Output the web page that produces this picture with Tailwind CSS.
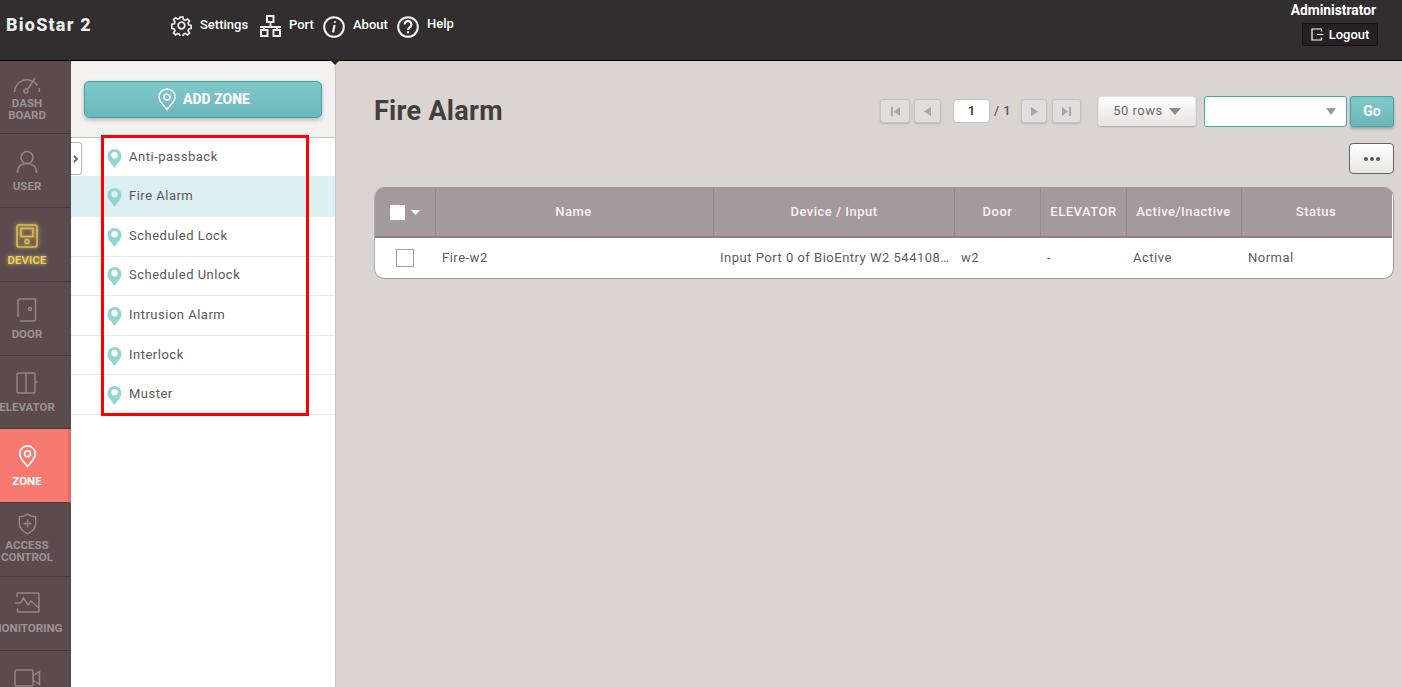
<!DOCTYPE html>
<html><head><meta charset="utf-8"><script src="https://cdn.jsdelivr.net/npm/@tailwindcss/browser@4"></script></head>
<body class="w-[1402px] h-[687px] overflow-hidden font-['Roboto',sans-serif] bg-[#dad5d1]">
<div class="relative w-[1402px] h-[687px] flex flex-col overflow-hidden">
  <!-- header -->
  <header class="h-[61px] shrink-0 bg-[#322e2f] border-b border-black flex text-white relative z-20">
    <div class="w-[171px] pl-[6px] pt-[13px] text-[18px] leading-[24px] font-extrabold tracking-[1.2px] text-[#eeeeee]">BioStar 2</div>
    <nav class="flex items-start pt-[14px] text-[13px] leading-[20px] font-medium text-white">
      <svg class="w-[21px] h-[21px] mt-px" viewBox="0 0 24 24" fill="none" stroke="#ececec" stroke-width="2"><circle cx="12" cy="12" r="3.8"/><path d="M10.3 2h3.4l.6 3 2.2.9 2.6-1.7 2.4 2.4-1.7 2.6.9 2.2 3 .6v3.400l-3 .6-.9 2.2 1.700 2.600-2.400 2.400-2.600-1.700-2.200.9-.6 3h-3.400l-.6-3-2.200-.9-2.600 1.700-2.400-2.400 1.700-2.600-.9-2.200-3-.6V10.500l3-.6.9-2.200-1.700-2.600 2.400-2.400 2.600 1.700 2.200-.9z" transform="translate(.5 .5) scale(.96)"/></svg>
      <span class="ml-[8px] w-[60px] mt-[1px]">Settings</span>
      <svg class="w-[21px] h-[22px] mt-px" viewBox="0 0 21 22" fill="none" stroke="#ececec" stroke-width="2"><rect x="7" y="1" width="6.500" height="6"/><path d="M10.500 7v5M0 12h21M4 12v3M17 12v3"/><rect x="1" y="15" width="6.500" height="6"/><rect x="13.500" y="15" width="6.500" height="6"/></svg>
      <span class="ml-[8px] w-[34px] mt-[1px]">Port</span>
      <svg class="w-[22px] h-[22px] mt-[2px]" viewBox="0 0 22 22" fill="none" stroke="#f2f2f2" stroke-width="2"><circle cx="11" cy="11" r="9.800"/><path d="M12 5.200v1.600M11.600 9 10 16.600" stroke-width="2.200"/></svg>
      <span class="ml-[8px] w-[45px] mt-[1px]">About</span>
      <svg class="w-[22px] h-[22px] -ml-px mt-[2px]" viewBox="0 0 22 22" fill="none" stroke="#f2f2f2" stroke-width="2"><circle cx="11" cy="11" r="9.800"/><path d="M7.600 8.400a3.400 3.400 0 1 1 5.200 2.900c-1.200.8-1.800 1.400-1.800 2.700M11 15.300v2" stroke-width="2.200"/></svg>
      <span class="ml-[8px]">Help</span>
    </nav>
    <div class="absolute right-[24px] top-0 flex flex-col items-end">
      <div class="text-[13.8px] leading-[20px] font-bold text-white mr-[2px]">Administrator</div>
      <div class="mt-[3px] w-[76px] h-[23px] bg-[#252122] border border-[#151314] rounded-[2px] flex items-center justify-center gap-[5px] text-[13px] font-medium">
        <svg class="w-[13px] h-[13px]" viewBox="0 0 13 13" fill="none" stroke="#fff" stroke-width="1.200"><path d="M10.500 3.500V1H1v11h9.500V9.500M6 6.500h6.500"/></svg>
        <span>Logout</span>
      </div>
    </div>
    <div class="absolute left-[330px] top-[60px] w-0 h-0 border-l-[5px] border-r-[5px] border-t-[5px] border-l-transparent border-r-transparent border-t-[#2a2627]"></div>
  </header>

  <div class="flex flex-1 min-h-0">
    <!-- rail -->
    <aside class="w-[71px] shrink-0 bg-[#5b4b4f] text-[#9c9295] text-[11.5px] leading-[12px] font-bold text-center overflow-hidden">
      <div class="h-[73px] border-b border-[#443a3d] pr-[17px] flex flex-col items-center pt-[14px]">
        <svg class="w-[30px] h-[20px]" viewBox="0 0 30 20" fill="none" stroke="#928689" stroke-width="1.500"><path d="M2.500 17a12.500 12.500 0 0 1 23-6.500M27 13a13 13 0 0 1 .5 4"/><circle cx="14" cy="16" r="2"/><path d="M15.500 14.500 23 3"/></svg>
        <div class="mt-[2px]">DASH<br>BOARD</div>
      </div>
      <div class="h-[74px] border-b border-[#443a3d] pr-[17px] flex flex-col items-center pt-[16px]">
        <svg class="w-[22px] h-[24px]" viewBox="0 0 22 24" fill="none" stroke="#928689" stroke-width="1.600"><circle cx="11" cy="7.500" r="6"/><path d="M1.500 23c0-6 3.500-9.500 9.500-9.500s9.500 3.500 9.500 9.500"/></svg>
        <div class="mt-[6px]">USER</div>
      </div>
      <div class="h-[74px] border-b border-[#443a3d] pr-[17px] flex flex-col items-center pt-[16px] text-[#e8cc5c]">
        <svg class="w-[22px] h-[24px] drop-shadow-[0_0_2px_#e8cc5c]" viewBox="0 0 22 24" fill="none" stroke="#d9bd50" stroke-width="1.600"><rect x="1" y="1" width="20" height="22" rx="2"/><rect x="5" y="4.500" width="12" height="8"/><circle cx="11" cy="17.500" r="2"/></svg>
        <div class="mt-[6px] drop-shadow-[0_0_2px_#e8cc5c]">DEVICE</div>
      </div>
      <div class="h-[74px] border-b border-[#443a3d] pr-[17px] flex flex-col items-center pt-[16px]">
        <svg class="w-[20px] h-[24px]" viewBox="0 0 20 24" fill="none" stroke="#928689" stroke-width="1.500"><path d="M1 19V3a2 2 0 0 1 2-2h15.500v20a2 2 0 0 1-2 2H3"/><circle cx="13" cy="11" r="1.500"/></svg>
        <div class="mt-[6px]">DOOR</div>
      </div>
      <div class="h-[73px] border-b border-[#443a3d] pr-[17px] flex flex-col items-center pt-[16px] whitespace-nowrap">
        <svg class="w-[22px] h-[22px]" viewBox="0 0 22 22" fill="none" stroke="#928689" stroke-width="1.500"><rect x="1" y="1" width="18" height="20" rx="1"/><path d="M10 1v20M19 10h2.500"/></svg>
        <div class="mt-[7px] -mx-[5px]">ELEVATOR</div>
      </div>
      <div class="h-[74px] bg-[#f67a70] border-r-[3px] border-[#e56a62] border-b border-b-[#443a3d] pr-[14px] flex flex-col items-center pt-[16px] text-white">
        <svg class="w-[19px] h-[23px]" viewBox="0 0 20 25" fill="none" stroke="#fff" stroke-width="1.800"><path d="M10 23.500C6 18 1.500 15 1.500 9.500a8.500 8.500 0 0 1 17 0C18.500 15 14 18 10 23.500z"/><circle cx="10" cy="9.500" r="3.200"/></svg>
        <div class="mt-[7px]">ZONE</div>
      </div>
      <div class="h-[74px] border-b border-[#443a3d] pr-[17px] flex flex-col items-center pt-[10px]">
        <svg class="w-[19px] h-[22px]" viewBox="0 0 21 24" fill="none" stroke="#928689" stroke-width="1.600"><path d="M10.500 1c3 2 6 3 9 3v8c0 5-4.500 8.500-9 11-4.500-2.500-9-6-9-11V4c3 0 6-1 9-3zM10.500 7v9M6 11.500h9"/></svg>
        <div class="mt-[4px]">ACCESS<br>CONTROL</div>
      </div>
      <div class="h-[74px] border-b border-[#443a3d] pr-[17px] flex flex-col items-center pt-[15px] whitespace-nowrap">
        <svg class="w-[26px] h-[21px]" viewBox="0 0 26 21" fill="none" stroke="#928689" stroke-width="1.500"><path d="M3 5V2a1 1 0 0 1 1-1h20a1 1 0 0 1 1 1v17a1 1 0 0 1-1 1H4.500a1 1 0 0 1-1-1v-3M1 11h5.500L9.500 6l4.500 7 3-4 8 7"/></svg>
        <div class="mt-[9px] -mx-[8px]">MONITORING</div>
      </div>
      <div class="h-[74px] pr-[17px] flex flex-col items-center pt-[18px]">
        <svg class="w-[27px] h-[18px]" viewBox="0 0 27 18" fill="none" stroke="#928689" stroke-width="1.500"><rect x="1" y="1" width="18" height="16" rx="1.500"/><path d="m19 7 6.500-4.500v13L19 11"/></svg>
      </div>
    </aside>

    <!-- zone list panel -->
    <section class="w-[265px] shrink-0 bg-white border-r border-[#c9c5c3] relative">
      <div class="h-[77px] bg-[#f3f2f0] border-b border-[#c4c2c1] pt-[20px] pl-[13px] pr-[13px]">
        <div class="w-[238px] h-[37px] rounded-[5px] border border-[#3ba5a5] bg-gradient-to-b from-[#80c9cb] to-[#6cb6ba] shadow-[0_2px_4px_rgba(0,0,0,0.25)] flex items-center justify-center gap-[7px] pl-[2px] text-white text-[14px] font-extrabold">
          <svg class="w-[18px] h-[23px]" viewBox="0 0 18 23" fill="none" stroke="#fff" stroke-width="1.500"><path d="M9 21.500C5.500 16.500 1 14 1 9a8 8 0 0 1 16 0c0 5-4.500 7.500-8 12.500z"/><circle cx="9" cy="9" r="3"/></svg>
          <span>ADD ZONE</span>
        </div>
      </div>
      <div class="absolute left-0 top-[81px] w-[11px] h-[33px] bg-white border border-l-0 border-[#b8b2b2] rounded-r-[3px] flex items-center justify-center z-10">
        <svg class="w-[6px] h-[8px]" viewBox="0 0 6 8" fill="none" stroke="#666" stroke-width="1.800"><path d="m1 1 3 3-3 3"/></svg>
      </div>
      <div class="text-[13px] leading-[20px] tracking-[0.5px] text-[#5d5658]">
        <div class="h-[38px] flex items-center pl-[36px] pb-[1px] gap-[7px]"><svg class="w-[15px] h-[19px] mt-[3px]" viewBox="0 0 15 19"><path fill="#93d5d5" fill-rule="evenodd" d="M7.500 19C5 14.500 0.500 12 0.500 7a7 7 0 0 1 14 0c0 5-4.500 7.500-7 12zM7.500 3a3.200 3.200 0 1 0 0 6.400 3.200 3.200 0 0 0 0-6.400z"/></svg><span>Anti-passback</span></div>
        <div class="h-[41px] flex items-center pl-[36px] pb-[2px] gap-[7px] bg-[#dcf0f1]"><svg class="w-[15px] h-[19px] mt-[3px]" viewBox="0 0 15 19"><path fill="#93d5d5" fill-rule="evenodd" d="M7.500 19C5 14.500 0.500 12 0.500 7a7 7 0 0 1 14 0c0 5-4.500 7.500-7 12zM7.500 3a3.200 3.200 0 1 0 0 6.400 3.200 3.200 0 0 0 0-6.400z"/></svg><span>Fire Alarm</span></div>
        <div class="h-[40px] flex items-center pl-[36px] pb-[1px] gap-[7px] border-b border-[#e8e8e8]"><svg class="w-[15px] h-[19px] mt-[3px]" viewBox="0 0 15 19"><path fill="#93d5d5" fill-rule="evenodd" d="M7.500 19C5 14.500 0.500 12 0.500 7a7 7 0 0 1 14 0c0 5-4.500 7.500-7 12zM7.500 3a3.200 3.200 0 1 0 0 6.400 3.200 3.200 0 0 0 0-6.400z"/></svg><span>Scheduled Lock</span></div>
        <div class="h-[39px] flex items-center pl-[36px] pb-[2px] gap-[7px] border-b border-[#e8e8e8]"><svg class="w-[15px] h-[19px] mt-[3px]" viewBox="0 0 15 19"><path fill="#93d5d5" fill-rule="evenodd" d="M7.500 19C5 14.500 0.500 12 0.500 7a7 7 0 0 1 14 0c0 5-4.500 7.500-7 12zM7.500 3a3.200 3.200 0 1 0 0 6.400 3.200 3.200 0 0 0 0-6.400z"/></svg><span>Scheduled Unlock</span></div>
        <div class="h-[40px] flex items-center pl-[36px] pb-[2px] gap-[7px] border-b border-[#e8e8e8]"><svg class="w-[15px] h-[19px] mt-[3px]" viewBox="0 0 15 19"><path fill="#93d5d5" fill-rule="evenodd" d="M7.500 19C5 14.500 0.500 12 0.500 7a7 7 0 0 1 14 0c0 5-4.500 7.500-7 12zM7.500 3a3.200 3.200 0 1 0 0 6.400 3.200 3.200 0 0 0 0-6.400z"/></svg><span>Intrusion Alarm</span></div>
        <div class="h-[39px] flex items-center pl-[36px] gap-[7px] border-b border-[#e8e8e8]"><svg class="w-[15px] h-[19px] mt-[3px]" viewBox="0 0 15 19"><path fill="#93d5d5" fill-rule="evenodd" d="M7.500 19C5 14.500 0.500 12 0.500 7a7 7 0 0 1 14 0c0 5-4.500 7.500-7 12zM7.500 3a3.200 3.200 0 1 0 0 6.400 3.200 3.200 0 0 0 0-6.400z"/></svg><span>Interlock</span></div>
        <div class="h-[40px] flex items-center pl-[36px] pb-[2px] gap-[7px] border-b border-[#e8e8e8]"><svg class="w-[15px] h-[19px] mt-[3px]" viewBox="0 0 15 19"><path fill="#93d5d5" fill-rule="evenodd" d="M7.500 19C5 14.500 0.500 12 0.500 7a7 7 0 0 1 14 0c0 5-4.500 7.500-7 12zM7.500 3a3.200 3.200 0 1 0 0 6.400 3.200 3.200 0 0 0 0-6.400z"/></svg><span>Muster</span></div>
      </div>
    </section>

    <!-- main -->
    <main class="flex-1 min-w-0 pl-[38px] pr-[8px]">
      <div class="h-[69px] flex items-start pt-[35px]">
        <h1 class="text-[27px] leading-[30px] font-bold tracking-[0.3px] text-[#433e40] w-[507px] -ml-px pl-px">Fire Alarm</h1>
        <div class="flex items-center mt-[3px]">
          <div class="w-[30px] h-[24px] bg-[#e0dedc] rounded-[3px] border border-[#c6c2c0] shadow-[0_1px_2px_rgba(0,0,0,0.15)] flex items-center justify-center"><svg class="w-[9px] h-[9px]" viewBox="0 0 9 9" fill="#a9a5a5"><path d="M0 0h2v9H0zM9 0v9L3 4.500z"/></svg></div>
          <div class="ml-[4px] w-[27px] h-[24px] bg-[#e0dedc] rounded-[3px] border border-[#c6c2c0] shadow-[0_1px_2px_rgba(0,0,0,0.15)] flex items-center justify-center"><svg class="w-[7px] h-[9px]" viewBox="0 0 7 9" fill="#a9a5a5"><path d="M7 0v9L0 4.500z"/></svg></div>
          <div class="ml-[12px] w-[37px] h-[24px] bg-white rounded-[4px] border border-[#c6c2c0] flex items-center justify-center text-[13px] font-bold text-[#4a4547]">1</div>
          <span class="ml-[4px] w-[27px] text-[13px] font-medium text-[#5a5557] tracking-[0.5px]">/ 1</span>
          <div class="w-[26px] h-[24px] bg-[#e0dedc] rounded-[3px] border border-[#c6c2c0] shadow-[0_1px_2px_rgba(0,0,0,0.15)] flex items-center justify-center"><svg class="w-[7px] h-[9px]" viewBox="0 0 7 9" fill="#a9a5a5"><path d="M0 0v9l7-4.500z"/></svg></div>
          <div class="ml-[5px] w-[29px] h-[24px] bg-[#e0dedc] rounded-[3px] border border-[#c6c2c0] shadow-[0_1px_2px_rgba(0,0,0,0.15)] flex items-center justify-center"><svg class="w-[9px] h-[9px]" viewBox="0 0 9 9" fill="#a9a5a5"><path d="M7 0h2v9H7zM0 0v9l6-4.500z"/></svg></div>
        </div>
        <div class="ml-[17px] mt-0 w-[98px] h-[30px] rounded-[3px] bg-gradient-to-b from-white to-[#e6e4e3] border border-[#e6e4e2] shadow-[0_1px_2px_rgba(0,0,0,0.2)] flex items-center justify-center gap-[6px] text-[13px] tracking-[0.5px] text-[#6e696b]">
          <span>50 rows</span><svg class="w-[12px] h-[7px]" viewBox="0 0 12 7" fill="#8e8a8a"><path d="M0 0h12L6 7z"/></svg>
        </div>
        <div class="ml-[8px] mt-0 w-[143px] h-[31px] rounded-[3px] bg-white border border-[#3fa9a5] flex items-center justify-end pr-[10px]">
          <svg class="w-[10px] h-[7px]" viewBox="0 0 10 7" fill="#a09c9c"><path d="M0 0h10L5 7z"/></svg>
        </div>
        <div class="ml-[3px] mt-0 w-[44px] h-[31px] rounded-[3px] bg-gradient-to-b from-[#80c9cb] to-[#6cb6ba] border border-[#3ba5a5] shadow-[0_2px_3px_rgba(0,0,0,0.25)] flex items-center justify-center text-[14px] font-bold text-white">Go</div>
      </div>
      <div class="flex justify-end h-[57px] pt-[13px]">
        <div class="w-[45px] h-[31px] rounded-[4px] border border-[#6b5f62] bg-gradient-to-b from-white to-[#e8e6e5] flex items-center justify-center gap-[2px]">
          <i class="w-[4px] h-[4px] rounded-full bg-[#5c5356]"></i><i class="w-[4px] h-[4px] rounded-full bg-[#5c5356]"></i><i class="w-[4px] h-[4px] rounded-full bg-[#5c5356]"></i>
        </div>
      </div>
      <div class="w-[1020px] h-[92px] rounded-[10px] overflow-hidden border border-[#a59a9d] border-t-0 border-l-[#b3aaac] bg-white text-[13px] tracking-[0.5px]">
        <div class="h-[51px] pt-[1px] bg-[#a4999c] border-b-2 border-[#8d8285] flex mr-[1px] font-medium text-[#f5f3f3] text-center items-stretch">
          <div class="w-[61px] border-r border-[#948a8d] flex items-center pl-[15px] gap-[6px]"><i class="w-[15px] h-[15px] bg-white"></i><svg class="w-[9px] h-[5px]" viewBox="0 0 9 5" fill="#fff"><path d="M0 0h9L4.500 5z"/></svg></div>
          <div class="w-[278px] border-r border-[#948a8d] flex items-center justify-center pr-[2px]">Name</div>
          <div class="w-[241px] border-r border-[#948a8d] flex items-center justify-center">Device / Input</div>
          <div class="w-[86px] border-r border-[#948a8d] flex items-center justify-center">Door</div>
          <div class="w-[86px] border-r border-[#948a8d] flex items-center justify-center">ELEVATOR</div>
          <div class="w-[115px] border-r border-[#948a8d] flex items-center justify-center whitespace-nowrap pr-[1px]">Active/Inactive</div>
          <div class="flex-1 flex items-center justify-center pr-[2px]">Status</div>
        </div>
        <div class="h-[40px] flex items-center text-[#605a5c]">
          <div class="w-[61px] pl-[21px]"><i class="block w-[18px] h-[18px] border border-[#a59a9d] bg-white"></i></div>
          <div class="w-[278px] pl-[6px]">Fire-w2</div>
          <div class="w-[241px] pl-[6px] whitespace-nowrap overflow-hidden">Input Port 0 of BioEntry W2 544108…</div>
          <div class="w-[86px] pl-[6px]">w2</div>
          <div class="w-[86px] pl-[6px]">-</div>
          <div class="w-[115px] pl-[6px]">Active</div>
          <div class="flex-1 pl-[6px]">Normal</div>
        </div>
      </div>
    </main>
  </div>

  <!-- red annotation -->
  <div class="absolute left-[101px] top-[135px] w-[208px] h-[281px] border-[3px] border-[#ff0000] pointer-events-none"></div>
</div>
</body></html>
